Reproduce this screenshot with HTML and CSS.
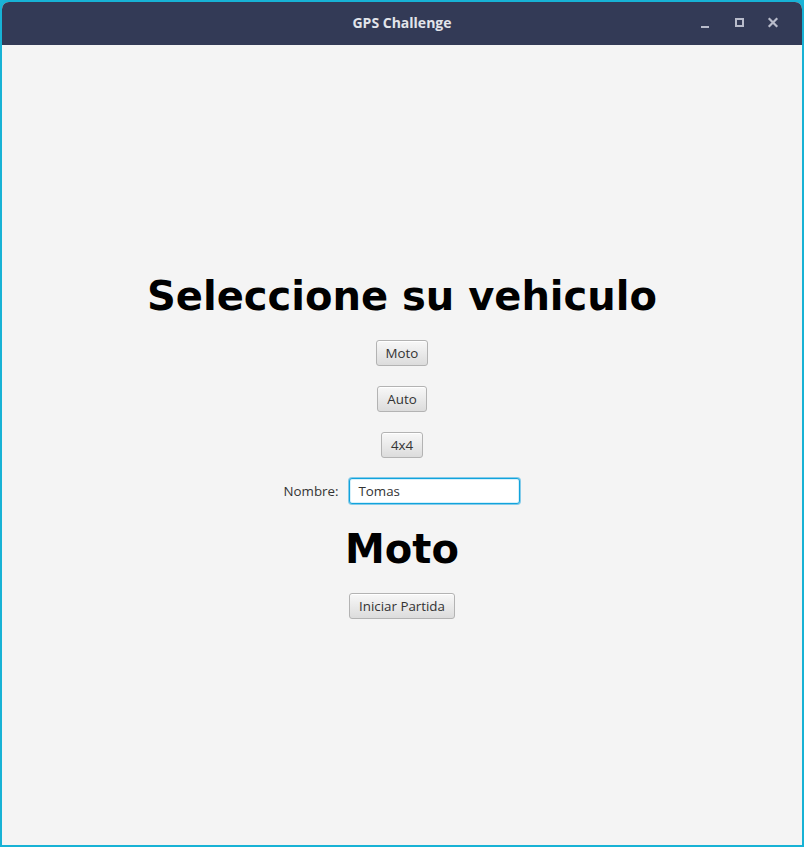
FILE: index.html
```html
<!DOCTYPE html>
<html lang="es">
<head>
<meta charset="utf-8">
<title>GPS Challenge</title>
<link rel="stylesheet" href="styles.css">
</head>
<body>
<div class="window">
  <header class="titlebar">
    <span class="spacer"></span>
    <span class="title">GPS Challenge</span>
    <div class="controls">
      <svg class="ctl" width="16" height="16" viewBox="0 0 16 16"><rect x="4" y="11" width="8" height="2" fill="#b9bccb"/></svg>
      <svg class="ctl" width="16" height="16" viewBox="0 0 16 16"><rect x="5" y="4" width="7" height="7" fill="none" stroke="#b9bccb" stroke-width="2"/></svg>
      <svg class="ctl" width="16" height="16" viewBox="0 0 16 16"><path d="M4.5 4 L11.5 11 M11.5 4 L4.5 11" stroke="#b9bccb" stroke-width="2.2" stroke-linecap="square"/></svg>
    </div>
  </header>
  <main class="content">
    <h1 class="heading">Seleccione su vehiculo</h1>
    <button class="btn">Moto</button>
    <button class="btn">Auto</button>
    <button class="btn">4x4</button>
    <div class="name-row">
      <label class="label" for="nombre">Nombre:</label>
      <input class="field" id="nombre" type="text" value="Tomas">
    </div>
    <h2 class="heading">Moto</h2>
    <button class="btn">Iniciar Partida</button>
  </main>
</div>
</body>
</html>
```

FILE: styles.css
```css
html, body {
  margin: 0;
  padding: 0;
  background: #1bb3d6;
}

.window {
  width: 804px;
  height: 847px;
  box-sizing: border-box;
  border: 2px solid #17b2d5;
  border-radius: 9px 9px 0 0;
  overflow: hidden;
  display: flex;
  flex-direction: column;
  background: #f4f4f4;
}

.titlebar {
  height: 43px;
  flex: 0 0 43px;
  background: #333a56;
  display: grid;
  grid-template-columns: 1fr auto 1fr;
  align-items: center;
}

.title {
  font-family: "Open Sans", sans-serif;
  font-weight: bold;
  font-size: 14px;
  color: #e2e4ea;
  padding-bottom: 2px;
}

.controls {
  justify-self: end;
  display: flex;
  gap: 18px;
  padding-right: 21px;
  padding-bottom: 2px;
}

.ctl {
  display: block;
}

.content {
  flex: 1;
  display: flex;
  flex-direction: column;
  align-items: center;
  justify-content: center;
  gap: 20px;
  padding-top: 2px;
}

.heading {
  margin: 0;
  font-family: "DejaVu Sans", sans-serif;
  font-weight: bold;
  font-size: 40px;
  line-height: 47px;
  color: #000;
}

.btn {
  font-family: "Open Sans", sans-serif;
  font-size: 13.33px;
  line-height: 16px;
  color: #333;
  padding: 4px 9px;
  height: 26px;
  box-sizing: border-box;
  border: 1px solid #b3b3b3;
  border-radius: 3px;
  background: linear-gradient(to bottom, #f8f8f8, #dcdcdc);
  box-shadow: inset 0 1px 0 #ffffff;
  margin: 0;
}

.name-row {
  display: flex;
  align-items: center;
  gap: 11px;
  margin-bottom: 2px;
}

.label {
  font-family: "Open Sans", sans-serif;
  font-size: 13.33px;
  color: #333;
}

.field {
  width: 171px;
  height: 26px;
  box-sizing: border-box;
  margin: 0;
  padding: 0 8px;
  font-family: "Open Sans", sans-serif;
  font-size: 13.33px;
  color: #333;
  background: #fff;
  border: 1px solid #11a3dc;
  box-shadow: 0 0 0 1px rgba(40, 170, 224, 0.55), inset 0 0 0 1px #d6f0fa;
  border-radius: 3px;
  outline: none;
}
```
